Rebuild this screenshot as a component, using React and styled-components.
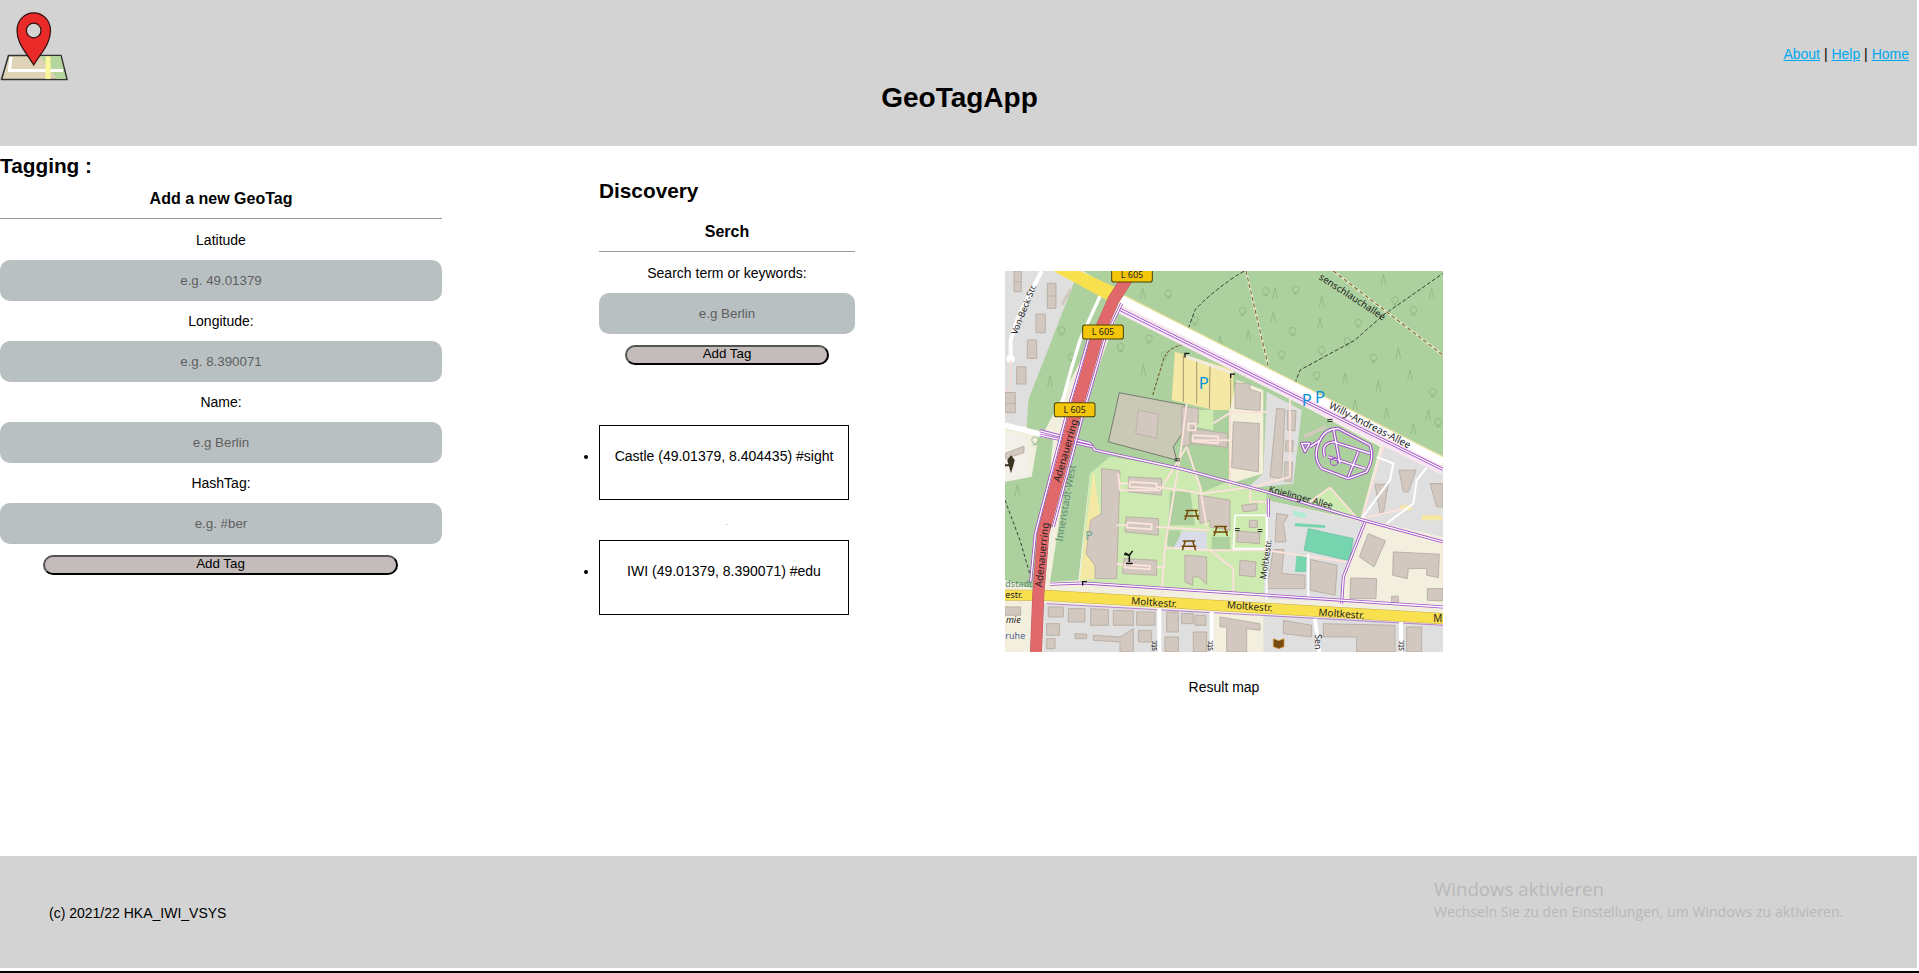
import React from "react";
import styled, { createGlobalStyle } from "styled-components";

const Global = createGlobalStyle`
  html, body { margin: 0; padding: 0; background: #fff; overflow: hidden; }
  body { font-family: "Liberation Sans", Arial, sans-serif; font-size: 14px; color: #000; }
`;

const Page = styled.div`
  position: relative;
  width: 1917px;
  height: 973px;
  display: flex;
  flex-direction: column;
`;

const Header = styled.header`
  height: 146px;
  background: #d3d3d3;
  display: flex;
  flex-direction: column;
`;
const HeaderTop = styled.div`
  display: flex;
  justify-content: space-between;
  height: 82px;
`;
const Logo = styled.svg`
  display: block;
  width: 68px;
  height: 82px;
`;
const Nav = styled.nav`
  padding: 46px 8px 0 0;
  line-height: 16px;
`;
const NavLink = styled.a`
  color: #00a8f0;
  text-decoration: underline;
`;
const Title = styled.h1`
  margin: 0;
  padding-left: 2px;
  font-size: 28px;
  line-height: 32px;
  font-weight: bold;
  text-align: center;
`;

const Main = styled.main`
  height: 710px;
  display: flex;
  align-items: flex-start;
`;
const Column = styled.section`
  width: ${(p) => p.$width}px;
  margin-left: ${(p) => p.$left || 0}px;
  padding-top: ${(p) => p.$top}px;
  flex: none;
`;
const SectionTitle = styled.h2`
  margin: 0;
  font-size: 20.8px;
  line-height: 24px;
  font-weight: bold;
`;
const FormTitle = styled.h3`
  margin: ${(p) => p.$gap}px 0 0;
  font-size: 16px;
  line-height: 18px;
  font-weight: bold;
  text-align: center;
`;
const Rule = styled.hr`
  margin: 10px 0 0;
  border: 0;
  height: 1px;
  background: #999;
`;
const Form = styled.form`
  display: flex;
  flex-direction: column;
  align-items: center;
  padding-top: 13px;
`;
const Label = styled.label`
  display: block;
  line-height: 16px;
  margin-top: ${(p) => (p.$first ? 0 : 12)}px;
  margin-bottom: 12px;
  text-align: center;
`;
const Input = styled.input`
  box-sizing: border-box;
  display: block;
  width: 100%;
  height: 41px;
  border: 0;
  border-radius: 10px;
  background: #b9c0c2;
  font-family: "Liberation Sans", Arial, sans-serif;
  font-size: 13.33px;
  text-align: center;
  outline: none;
  &::placeholder { color: #5f5f5f; opacity: 1; }
`;
const Button = styled.button`
  box-sizing: border-box;
  width: ${(p) => p.$width}px;
  height: 20px;
  margin-top: 11px;
  margin-right: ${(p) => p.$nudge || 0}px;
  padding: 0 0 2px;
  border: 2px outset #000;
  border-radius: 10px;
  background: #c4bcba;
  color: #000;
  font-family: "Liberation Sans", Arial, sans-serif;
  font-size: 13.33px;
  line-height: 14px;
`;
const TagList = styled.ul`
  margin: 60px 0 0;
  padding: 0;
  list-style: disc outside;
`;
const TagItem = styled.li``;
const TagBox = styled.div`
  box-sizing: border-box;
  width: 250px;
  height: 75px;
  padding-top: 22px;
  border: 1px solid #000;
  line-height: 16px;
  text-align: center;
`;
const TagGap = styled.li`
  list-style: none;
  height: 40px;
  width: 256px;
  text-align: center;
  font-size: 6px;
  line-height: 46px;
`;
const Figure = styled.figure`
  margin: 125px 0 0 150px;
  width: 438px;
  flex: none;
`;
const MapArt = styled.svg`
  display: block;
  width: 438px;
  height: 381px;
`;
const Caption = styled.figcaption`
  margin-top: 27px;
  line-height: 16px;
  text-align: center;
`;
const Footer = styled.footer`
  box-sizing: border-box;
  height: 112px;
  background: #d3d3d3;
  display: flex;
  align-items: center;
  padding: 2px 0 0 49px;
`;
const BottomEdge = styled.div`
  margin: 3px -2px 0 0;
  height: 2px;
  background: #000;
`;
const Watermark = styled.div`
  position: absolute;
  left: 1434px;
  top: 876px;
  font-family: "Open Sans", sans-serif;
  color: #b8b8b8;
  pointer-events: none;
`;
const WatermarkTitle = styled.div`
  font-size: 18.7px;
  line-height: 26px;
`;
const WatermarkText = styled.div`
  font-size: 14.1px;
  line-height: 20px;
`;

const C = {
  wood: "#add19e", resid: "#e0dfdf", bldg: "#d3c8bf", edge: "#b3a99f", grass: "#cdebb0",
  cream: "#f2efdf", purple: "#a24fc8", foot: "#f8d8cf", yel: "#f9e04f", red: "#e2696b", park: "#f5e8a4",
};

const Poly = ({ p, f, s, w }) => <polygon points={p} fill={f} stroke={s || "none"} strokeWidth={w || 0} />;
const Bldg = ({ p }) => <polygon points={p} fill={C.bldg} stroke={C.edge} strokeWidth="2.5" />;
const Line = ({ d, c, w, dash, o }) => (
  <path d={d} fill="none" stroke={c} strokeWidth={w} strokeDasharray={dash} opacity={o} strokeLinejoin="round" />
);
const Cycle = ({ d }) => (
  <>
    <Line d={d} c={C.purple} w={9} />
    <Line d={d} c="#fff" w={4} />
  </>
);
const Foot = ({ d }) => (
  <>
    <Line d={d} c={C.foot} w={6} />
    <Line d={d} c="#fff" w={2} o={0.7} />
  </>
);
const Sign = ({ x, y }) => (
  <g>
    <rect x={x} y={y} width="122" height="42" rx="7" fill="#f3c60a" stroke="#4d4000" strokeWidth="3" />
    <text x={x + 61} y={y + 30} textAnchor="middle" fontFamily="'Noto Sans', sans-serif" fontSize="27" fill="#222">L 605</text>
  </g>
);
const Label2 = ({ x, y, r = 0, size = 30, fill = "#222", style, anchor, children }) => (
  <text
    x={x}
    y={y}
    transform={`rotate(${r} ${x} ${y})`}
    fontFamily="'Noto Sans', sans-serif"
    fontSize={size}
    fill={fill}
    fontStyle={style}
    textAnchor={anchor}
  >
    {children}
  </text>
);
const ParkP = ({ x, y, fill = "#0a92d8", size = 50 }) => (
  <text x={x} y={y} fontFamily="'Noto Sans', sans-serif" fontSize={size} fill={fill}>P</text>
);
const Table = ({ x, y }) => (
  <path
    d={`M${x - 19} ${y - 14}h38M${x - 22} ${y + 2}h44M${x - 11} ${y - 14}l-9 28M${x + 11} ${y - 14}l9 28`}
    fill="none"
    stroke="#734a08"
    strokeWidth="4.5"
  />
);
const Gate = ({ x, y }) => (
  <path d={`M${x} ${y}v14M${x} ${y + 2}h13`} stroke="#111" strokeWidth="4" fill="none" />
);
const Needle = ({ x, y }) => (
  <path d={`M${x - 7} ${y + 16}L${x} ${y - 16}L${x + 7} ${y + 16}`} fill="none" stroke="#8fb682" strokeWidth="2.5" />
);
const Round = ({ x, y }) => (
  <g fill="none" stroke="#8fb682" strokeWidth="2.5">
    <circle cx={x} cy={y} r="10" />
    <path d={`M${x} ${y + 10}v4M${x - 7} ${y + 14}h14`} />
  </g>
);

const needles = [[428,100],[825,100],[965,125],[1150,60],[1295,100],[820,170],[960,190],[1195,280],[1230,345],[1035,355],[1135,378],[1065,435],[1160,458],[1285,465],[660,245],[150,365],[430,330],[52,690],[1240,505],[745,225]];
const rounds = [[505,100],[797,93],[887,88],[728,152],[1075,187],[878,212],[1240,150],[1120,292],[965,270],[845,282],[585,180],[447,235],[185,210],[215,290],[362,260],[1042,243],[950,345],[1298,395],[1315,485],[105,540],[493,285],[1185,120]];

const RING = "M385 50L340 120L290 235L262 333L222 470L172 660L130 820L115 1000L108 1175";

function CampusMap() {
  return (
    <MapArt viewBox="15 33 1314 1142" preserveAspectRatio="none" role="img" aria-label="Result map">
      <rect x="15" y="33" width="1314" height="1142" fill={C.cream} />
      {/* land use */}
      <Poly p="15,33 245,33 330,110 85,420 80,500 15,490" f={C.resid} />
      <Poly p="225,60 340,110 130,520 100,525 80,500 85,420" f={C.wood} />
      <Poly p="15,515 75,530 95,650 15,665" f="#f3f0ea" />
      <Poly p="15,665 95,650 115,530 160,530 115,990 15,960" f={C.wood} />
      <Poly p="250,33 1329,33 1329,600 370,115" f={C.wood} />
      <Poly p="360,145 1140,560 1080,780 800,720 270,640 235,960 150,965 215,540" f={C.wood} />
      <Poly p="270,640 330,590 540,625 800,700 800,1010 240,965" f={C.grass} />
      <Poly p="280,630 240,960 290,955 300,760" f={C.park} />
      <Poly p="580,560 682,590 682,665 610,695 590,640" f={C.wood} />
      <Poly p="510,695 570,690 585,795 505,795" f={C.wood} />
      <Poly p="500,810 542,810 535,860 503,860" f={C.wood} />
      <Poly p="635,830 690,830 690,870 635,870" f={C.wood} />
      <Poly p="525,275 700,330 700,450 640,450 515,420" f={C.park} />
      <Line d="M550 285V425M590 300V430M630 315L628 445M692 335V450" c="#8f8a60" w={2.5} />
      <Line d="M560 290L700 340" c="#f0ebe0" w={8} />
      <Poly p="590,450 640,450 640,510 590,500" f={C.grass} />
      <Poly p="710,360 790,390 790,640 690,670 690,450" f="#f3efd8" />
      <Poly p="800,395 905,450 880,670 740,685 790,640" f={C.resid} />
      <Poly p="800,720 1090,785 1030,960 1020,1025 790,1015" f={C.resid} />
      <Poly p="1150,560 1329,620 1329,830 1085,775" f={C.resid} />
      <Poly p="1100,800 1329,850 1329,1045 1025,1030 1050,940" f={C.cream} />
      <Poly p="990,682 1068,770 930,725" f={C.grass} />
      <Poly p="548,812 620,815 620,870 520,865" f="#d9dce8" />
      <Poly p="15,1020 100,1020 100,1175 15,1175" f={C.cream} />
      <Poly p="130,1030 1329,1090 1329,1175 130,1175" f={C.resid} />
      <Poly p="640,1050 790,1060 790,1175 640,1175" f={C.cream} />
      {/* trees */}
      {needles.map(([x, y]) => <Needle key={`n${x}${y}`} x={x} y={y} />)}
      {rounds.map(([x, y]) => <Round key={`r${x}${y}`} x={x} y={y} />)}
      {/* paths through the wood */}
      <Line d="M565 205L585 150Q620 110 690 60T775 33" c="#222" w={2.5} dash="12 6" />
      <Line d="M885 370L900 330L1065 240L1150 165L1329 40" c="#222" w={2.5} dash="12 6" />
      <Line d="M738 33L805 320" c="#dce8c8" w={7} />
      <Line d="M738 33L805 320" c="#7a5a20" w={3} dash="12 8" />
      <Line d="M1000 33L1329 285" c="#dce8c8" w={7} />
      <Line d="M1000 33L1329 285" c="#7a5a20" w={3} dash="12 8" />
      <Line d="M458 405L490 300Q500 260 565 250" c="#6b5a20" w={3} dash="10 5" />
      <Line d="M15 720L60 840L95 960" c="#222" w={2.5} dash="10 7" />
      {/* buildings top left */}
      <Bldg p="42,33 64,33 64,95 42,95" />
      <Bldg p="142,70 168,70 168,145 142,145" />
      <Bldg p="108,162 136,162 136,218 108,218" />
      <Bldg p="82,240 110,240 110,295 82,295" />
      <Bldg p="50,320 78,320 78,372 50,372" />
      <Bldg p="15,397 46,397 46,458 15,458" />
      <Line d="M15 430H46M142 108H168M42 65H64" c={C.edge} w={2} />
      <Bldg p="15,580 72,558 72,578 15,596" />
      <Line d="M185 135L212 88" c={C.bldg} w={9} />
      <Line d="M125 33L55 170L32 240L32 295" c="#fff" w={12} />
      <circle cx="32" cy="296" r="13" fill="#fff" />
      <Line d="M32 300V385L15 395" c={C.foot} w={4} />
      {/* campus */}
      <Poly p="358,398 555,435 560,500 520,560 530,600 325,545" f="#c9c9b6" s="#555" w="2" />
      <Poly p="415,450 475,462 470,535 407,520" f={C.bldg} s={C.edge} w="2" />
      <Bldg p="705,368 750,372 750,388 782,398 780,452 705,445" />
      <Bldg p="700,485 778,490 775,635 695,622" />
      <Bldg p="830,445 855,447 845,655 810,650" />
      <Bldg p="862,450 888,452 885,512 862,510" />
      <Bldg p="858,540 880,542 878,575 856,572" />
      <Bldg p="855,605 878,607 875,665 853,662" />
      <Bldg p="545,440 595,445 595,490 570,510 570,555 545,560" />
      <Bldg p="575,505 682,520 682,562 575,550" />
      <Bldg p="305,625 360,632 350,955 285,955 285,915 258,880 272,780 305,760" />
      <Bldg p="385,650 485,655 485,705 385,695" />
      <Bldg p="378,770 475,775 475,825 375,815" />
      <Bldg p="372,895 470,900 470,945 368,940" />
      <Bldg p="595,705 690,720 690,810 630,800 630,780 600,790" />
      <Bldg p="555,885 620,890 620,972 597,950 578,950 578,975 555,965" />
      <Bldg p="720,900 768,905 765,950 718,945" />
      <Bldg p="725,735 770,730 772,750 730,755" />
      <Bldg p="712,812 780,818 778,850 710,845" />
      <Bldg p="748,780 772,780 772,802 748,802" />
      <Bldg p="830,760 865,765 850,790 858,845 825,845" />
      <Bldg p="820,868 852,868 845,940 915,945 915,985 800,985" />
      <Bldg p="932,898 1012,915 1005,1005 930,990" />
      <Bldg p="1105,820 1157,842 1122,920 1078,890" />
      <Bldg p="1180,875 1318,882 1315,952 1280,945 1280,925 1225,925 1222,955 1178,945" />
      <Bldg p="1052,953 1130,955 1128,1015 1050,1015" />
      <Bldg p="1282,985 1329,985 1329,1022 1282,1020" />
      <Bldg p="1175,1008 1195,1008 1195,1028 1175,1028" />
      <Bldg p="1125,672 1165,672 1150,760 1140,760" />
      <Bldg p="1197,630 1248,630 1225,695 1210,695" />
      <Bldg p="1290,670 1329,670 1329,740 1310,740" />
      <Poly p="910,525 975,495 980,503 915,535" f={C.bldg} />
      <Poly p="1200,735 1235,735 1235,750 1200,750" f={C.park} />
      <Poly p="1265,765 1325,765 1325,780 1265,780" f={C.park} />
      <Poly p="925,805 1060,835 1050,902 912,870" f="#76d4ae" s="#5fb796" w="1.5" />
      <Poly p="890,880 920,885 918,935 885,935" f="#76d4ae" />
      <Poly p="885,788 975,795 975,803 885,798" f="#76d4ae" />
      <Poly p="880,750 920,760 915,775 878,765" f="#b2ecd2" />
      {/* foot ways */}
      <Foot d="M560 430L540 590L495 860L485 1000" />
      <Foot d="M560 560L600 680L620 800" />
      <Foot d="M560 560L480 690H360L355 640" />
      <Foot d="M360 670H385M470 680L610 700L760 680L870 650L870 395" />
      <Foot d="M350 795H380M470 800L630 810M350 912H370M470 920H495" />
      <Foot d="M495 862L630 870L700 925L700 1005M630 870H800L1040 905" />
      <Foot d="M690 450V680M640 490L695 455L800 455M575 540H690" />
      <Foot d="M990 682L930 725M990 682L1068 770M1085 775L1150 560" />
      <Foot d="M1085 775L1215 745M750 690V725H800" />
      <Line d="M705 765H800V865H700Z" c="#fff" w={5} />
      <Foot d="M390 665L470 670L470 685L388 680ZM383 787L455 792L455 807L380 802ZM375 912L450 917L450 927L373 922Z" />
      <Foot d="M565 490h22v20h-22zM578 525l76 4v20l-76 -6z" />
      <Line d="M1130 590L1180 610L1170 660L1085 775M1290 610L1250 660L1240 730L1160 790" c="#fff" w={6} />
      <Line d="M925 880V1020M800 760V1015" c="#fff" w={6} />
      {/* park of cycle paths */}
      <Line d="M905 550h24l-14 24zM930 560L960 540Q975 505 1015 505L1110 555Q1125 590 1100 635L1045 655L965 625Q935 590 960 540M975 590Q960 550 1000 545L1110 580M1000 505L1020 610M1075 575L1045 650M985 590L1095 625" c={C.purple} w={10} />
      <Line d="M905 550h24l-14 24zM930 560L960 540Q975 505 1015 505L1110 555Q1125 590 1100 635L1045 655L965 625Q935 590 960 540M975 590Q960 550 1000 545L1110 580M1000 505L1020 610M1075 575L1045 650M985 590L1095 625" c="#fff" w={4} />
      <circle cx="1002" cy="605" r="11" fill="none" stroke={C.purple} strokeWidth="3" />
      {/* Knielinger Allee and side ways */}
      <Line d="M15 495L135 525" c="#fff" w={16} />
      <Cycle d="M120 512L270 550L285 570L540 625L800 695L1090 780L1329 845" />
      <Cycle d="M120 525L280 560" />
      <Cycle d="M1095 785L1030 950L1025 1030" />
      <Cycle d="M805 715V770" />
      {/* Willy-Andreas-Allee */}
      <Line d="M365 118L1329 605" c="#fff" w={30} />
      <Line d="M370 105L1329 590" c="#eedc8a" w={3} />
      <Line d="M360 148L1329 632" c="#f7e6f2" w={26} />
      <Cycle d="M360 148L1329 628" />
      {/* Moltkestr */}
      <Line d="M15 1005H130L1329 1075" c="#c4ae55" w={33} />
      <Line d="M15 1005H130L1329 1075" c={C.yel} w={30} />
      <Cycle d="M150 972L250 968L1329 1040" />
      <Line d="M140 1030L1329 1095" c={C.purple} w={2} />
      {/* Adenauerring */}
      <Line d="M306 95L240 240L212 333L175 470" c="#fff" w={10} />
      <Cycle d="M266 235L238 333L198 470L148 660L106 820L92 965" />
      <Cycle d="M365 130L315 235L287 333L247 470L197 660L160 800" />
      <Poly p="160,33 240,33 352,85 330,125" f={C.yel} />
      <Line d={RING} c="#b9575a" w={36} />
      <Line d={RING} c={C.red} w={33} />
      <Line d="M225 490L170 690L140 820" c="#c75a5c" w={2} dash="3 8" />
      <Line d="M15 1005H96" c={C.yel} w={14} />
      {/* lower streets and buildings */}
      <Line d="M478 1045V1175M635 1055V1175M945 1075L958 1175M1203 1085V1175" c="#fff" w={12} />
      <Bldg p="145,1040 190,1040 190,1070 145,1070" />
      <Bldg p="205,1045 255,1045 255,1085 205,1085" />
      <Bldg p="272,1045 325,1048 325,1095 272,1095" />
      <Bldg p="340,1050 400,1052 400,1095 340,1095" />
      <Bldg p="410,1055 465,1055 465,1095 410,1095" />
      <Bldg p="140,1090 178,1090 178,1125 140,1125" />
      <Bldg p="140,1135 165,1135 165,1165 140,1165" />
      <Bldg p="225,1120 260,1122 260,1135 225,1135" />
      <Bldg p="280,1125 360,1130 400,1105 400,1175 360,1175 360,1145 280,1140" />
      <Bldg p="415,1110 455,1110 455,1145 415,1145" />
      <Bldg p="500,1055 535,1055 535,1115 500,1115" />
      <Bldg p="495,1130 535,1130 535,1175 495,1175" />
      <Bldg p="545,1060 580,1060 580,1090 545,1090" />
      <Bldg p="585,1065 618,1065 618,1095 585,1095" />
      <Bldg p="580,1115 620,1115 620,1175 580,1175" />
      <Bldg p="660,1070 780,1090 780,1110 740,1105 740,1175 680,1175 680,1100 660,1100" />
      <Bldg p="850,1080 935,1095 935,1130 850,1120" />
      <Bldg p="970,1090 1185,1095 1185,1175 1070,1175 1070,1130 970,1130" />
      <Bldg p="1220,1100 1265,1100 1265,1175 1220,1175" />
      <Bldg p="15,1040 62,1040 62,1065 15,1065" />
      <path d="M820 1135l16 6l16 -6v24l-16 6l-16 -6z" fill="#7a4b10" stroke="#d59a30" strokeWidth="2" />
      {/* symbols */}
      <ParkP x={905} y={437} />
      <ParkP x={945} y={430} />
      <ParkP x={596} y={388} />
      <ParkP x={256} y={840} fill="#6fa9a0" size={38} />
      <Table x={575} y={765} />
      <Table x={662} y={813} />
      <Table x={567} y={856} />
      <path d="M388 905V885M375 878L388 885L398 872M388 885L372 882M378 910H398" fill="none" stroke="#111" strokeWidth="4.5" />
      <path d="M25 600l8 -10 8 10 -8 28zM15 615h25" stroke="#3a3320" strokeWidth="6" fill="#3a3320" />
      <Gate x={555} y={278} />
      <Gate x={692} y={340} />
      <Gate x={248} y={962} />
      <path d="M524 596h16M524 602h16M982 478h16M982 484h16M705 805h14M705 811h14M773 808h14M773 814h14" stroke="#111" strokeWidth="2.500" />
      {/* signs */}
      <Sign x={335} y={24} />
      <Sign x={248} y={195} />
      <Sign x={163} y={428} />
      {/* names */}
      <Label2 x={50} y={225} r={-68} size={26}>Von-Beck-Str.</Label2>
      <Label2 x={180} y={668} r={-74}>Adenauerring</Label2>
      <Label2 x={126} y={982} r={-84}>Adenauerring</Label2>
      <Label2 x={187} y={845} r={-80} fill="#5c8c72">Innenstadt-West</Label2>
      <Label2 x={985} y={443} r={27}>Willy-Andreas-Allee</Label2>
      <Label2 x={805} y={695} r={15} size={27}>Knielinger Allee</Label2>
      <Label2 x={955} y={56} r={33} size={29}>senschlauchallee</Label2>
      <Label2 x={393} y={1032} r={4}>Moltkestr.</Label2>
      <Label2 x={680} y={1044} r={4}>Moltkestr.</Label2>
      <Label2 x={955} y={1066} r={4}>Moltkestr.</Label2>
      <Label2 x={1300} y={1086}>M</Label2>
      <Label2 x={798} y={958} r={-82} size={26}>Moltkestr.</Label2>
      <Label2 x={16} y={1012} size={27}>estr.</Label2>
      <Label2 x={16} y={980} size={27} fill="#5c8c72">dstadt</Label2>
      <Label2 x={18} y={1088} size={27} style="italic">mie</Label2>
      <Label2 x={16} y={1135} size={27} fill="#55608f">ruhe</Label2>
      <Label2 x={945} y={1122} r={90} size={26}>Sen</Label2>
      <Label2 x={470} y={1172} r={-90} size={24}>str.</Label2>
      <Label2 x={640} y={1172} r={-90} size={24}>str.</Label2>
      <Label2 x={1212} y={1172} r={-90} size={24}>str.</Label2>
    </MapArt>
  );
}

export default function App() {
  return (
    <Page>
      <Global />
      <Header>
        <HeaderTop>
          <Logo viewBox="0 0 68 82" aria-label="GeoTagApp logo">
            <path d="M8.500 55.500H61L67 79.500H1.500Z" fill="#dfd4b8" stroke="#333" strokeWidth="1.600" strokeLinejoin="round" />
            <path d="M40 56H60.500L66 79H57Z" fill="#b5d69b" />
            <path d="M11 57L9.500 70.500H63" fill="none" stroke="#fff" strokeWidth="3" />
            <path d="M48 56.500V79" stroke="#fbf79a" strokeWidth="5" />
            <path d="M33.700 65C26 52 17 44 17 30.500C17 20.500 24.500 12.800 33.700 12.800C43 12.800 50.500 20.500 50.500 30.500C50.500 44 41.500 52 33.700 65Z" fill="#e92a28" stroke="#2a1010" strokeWidth="1.200" />
            <circle cx="33.700" cy="30.500" r="7.300" fill="#d3d3d3" stroke="#2a1010" strokeWidth="1.200" />
          </Logo>
          <Nav>
            <NavLink href="#about">About</NavLink> | <NavLink href="#help">Help</NavLink> | <NavLink href="#home">Home</NavLink>
          </Nav>
        </HeaderTop>
        <Title>GeoTagApp</Title>
      </Header>
      <Main>
        <Column $width={442} $top={8}>
          <SectionTitle>Tagging :</SectionTitle>
          <FormTitle $gap={12}>Add a new GeoTag</FormTitle>
          <Rule />
          <Form>
            <Label $first>Latitude</Label>
            <Input placeholder="e.g. 49.01379" />
            <Label>Longitude:</Label>
            <Input placeholder="e.g. 8.390071" />
            <Label>Name:</Label>
            <Input placeholder="e.g Berlin" />
            <Label>HashTag:</Label>
            <Input placeholder="e.g. #ber" />
            <Button type="button" $width={355} $nudge={1}>Add Tag</Button>
          </Form>
        </Column>
        <Column $width={256} $left={157} $top={33}>
          <SectionTitle>Discovery</SectionTitle>
          <FormTitle $gap={20}>Serch</FormTitle>
          <Rule />
          <Form>
            <Label $first>Search term or keywords:</Label>
            <Input placeholder="e.g Berlin" />
            <Button type="button" $width={204}>Add Tag</Button>
          </Form>
          <TagList>
            <TagItem><TagBox>Castle (49.01379, 8.404435) #sight</TagBox></TagItem>
            <TagGap>.</TagGap>
            <TagItem><TagBox>IWI (49.01379, 8.390071) #edu</TagBox></TagItem>
          </TagList>
        </Column>
        <Figure>
          <CampusMap />
          <Caption>Result map</Caption>
        </Figure>
      </Main>
      <Footer>(c) 2021/22 HKA_IWI_VSYS</Footer>
      <BottomEdge />
      <Watermark>
        <WatermarkTitle>Windows aktivieren</WatermarkTitle>
        <WatermarkText>Wechseln Sie zu den Einstellungen, um Windows zu aktivieren.</WatermarkText>
      </Watermark>
    </Page>
  );
}
